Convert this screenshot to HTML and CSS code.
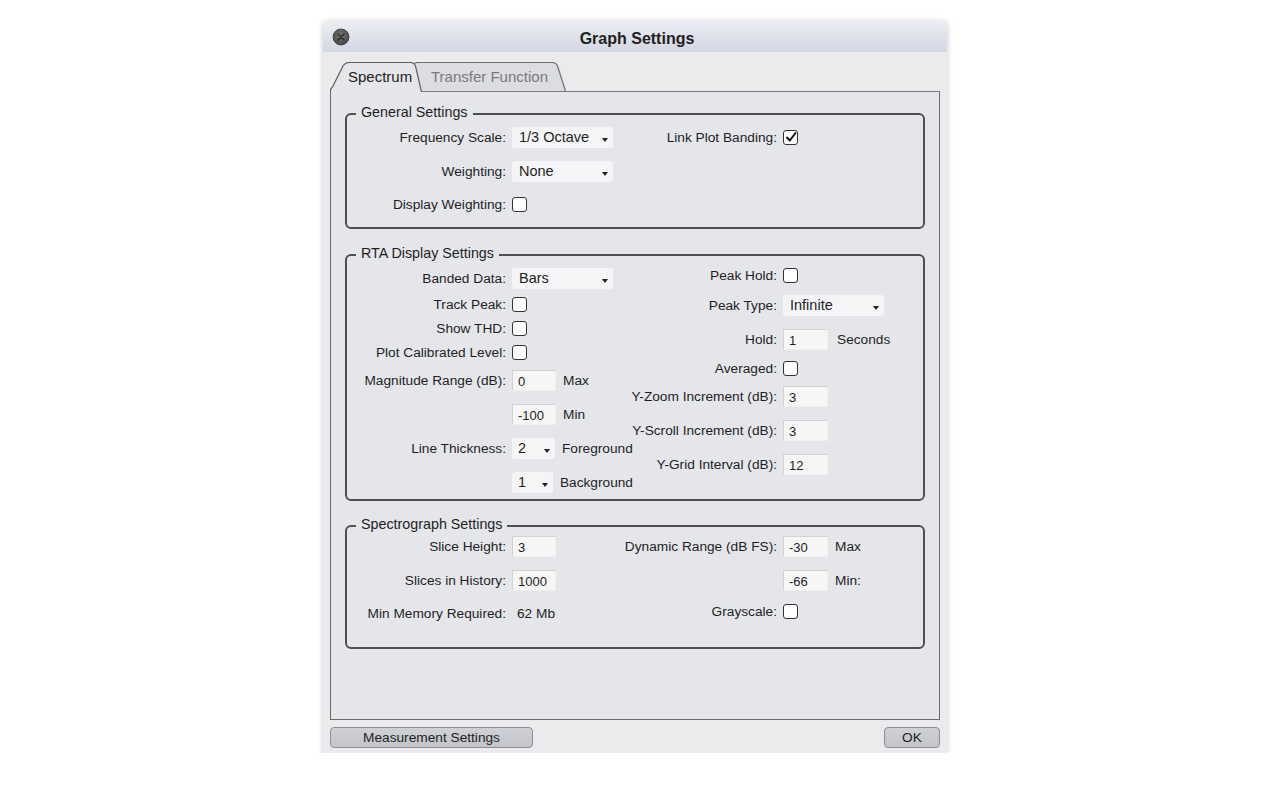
FILE: index.html
```html
<!DOCTYPE html>
<html lang="en">
<head>
    <meta charset="UTF-8">
    <meta name="viewport" content="width=device-width, initial-scale=1.0">
    <title>Graph Settings</title>
    <link rel="stylesheet" href="styles.css">
</head>
<body>
    <div class="window">
        <div class="titlebar">
            <span class="close">
                <svg width="18" height="18" viewBox="0 0 18 18">
                    <defs>
                        <radialGradient id="closeGrad" cx="50%" cy="40%" r="60%">
                            <stop offset="0" stop-color="#7a7a7a"/>
                            <stop offset="1" stop-color="#444"/>
                        </radialGradient>
                    </defs>
                    <circle cx="9" cy="9" r="8" fill="url(#closeGrad)" stroke="#3a3a3a" stroke-width="0.8"/>
                    <path d="M6 6 L12 12 M12 6 L6 12" stroke="#2b2b2b" stroke-width="1.6" stroke-linecap="round"/>
                </svg>
            </span>
            <span class="title">Graph Settings</span>
        </div>

        <div class="content">
            <div class="tabs">
                <div class="tab active">
                    <svg class="tab-shape" width="92" height="30" viewBox="0 0 92 30">
                        <path d="M0.5 30 L0.5 28 C0.5 27 2 26 3 24 L12 6 C13.5 2 16 0.5 20 0.5 L80 0.5 C83 0.5 84.5 1.5 85.5 4 L91.5 30" fill="#e5e6ea" stroke="#5e5e5e" stroke-width="1.2"/>
                    </svg>
                    <span class="tab-text">Spectrum</span>
                </div>
                <div class="tab">
                    <svg class="tab-shape" width="153" height="30" viewBox="0 0 153 30">
                        <path d="M0.5 29 L0.5 3 C1 1 2.5 0.5 5 0.5 L139 0.5 C142 0.5 143.5 1.5 144.5 4 L152.5 29" fill="#dcdde1" stroke="#6e6e6e" stroke-width="1.2"/>
                    </svg>
                    <span class="tab-text">Transfer Function</span>
                </div>
            </div>

            <div class="panel">
                <fieldset class="group general">
                    <legend>General Settings</legend>
                    <div class="cols">
                        <div class="col left pad3">
                            <div class="row">
                                <span class="lbl">Frequency Scale:</span>
                                <span class="select">1/3 Octave</span>
                            </div>
                            <div class="row">
                                <span class="lbl">Weighting:</span>
                                <span class="select">None</span>
                            </div>
                            <div class="row t9">
                                <span class="lbl">Display Weighting:</span>
                                <span class="check"></span>
                            </div>
                        </div>
                        <div class="col right pad3">
                            <div class="row">
                                <span class="lbl">Link Plot Banding:</span>
                                <span class="check checked">
                                    <svg width="12" height="12" viewBox="0 0 12 12"><path d="M2 6.5 L4.8 9.5 L10.5 2" fill="none" stroke="#111" stroke-width="2" stroke-linecap="round" stroke-linejoin="round"/></svg>
                                </span>
                            </div>
                        </div>
                    </div>
                </fieldset>

                <fieldset class="group rta">
                    <legend>RTA Display Settings</legend>
                    <div class="cols">
                        <div class="col left pad3">
                            <div class="row">
                                <span class="lbl">Banded Data:</span>
                                <span class="select">Bars</span>
                            </div>
                            <div class="row t2">
                                <span class="lbl">Track Peak:</span>
                                <span class="check"></span>
                            </div>
                            <div class="row t0">
                                <span class="lbl">Show THD:</span>
                                <span class="check"></span>
                            </div>
                            <div class="row t0">
                                <span class="lbl">Plot Calibrated Level:</span>
                                <span class="check"></span>
                            </div>
                            <div class="row t4">
                                <span class="lbl">Magnitude Range (dB):</span>
                                <input class="field" type="text" value="0" readonly>
                                <span class="unit">Max</span>
                            </div>
                            <div class="row">
                                <span class="lbl"></span>
                                <input class="field" type="text" value="-100" readonly>
                                <span class="unit">Min</span>
                            </div>
                            <div class="row">
                                <span class="lbl">Line Thickness:</span>
                                <span class="select small">2</span>
                                <span class="unit">Foreground</span>
                            </div>
                            <div class="row">
                                <span class="lbl"></span>
                                <span class="select small">1</span>
                                <span class="unit">Background</span>
                            </div>
                        </div>
                        <div class="col right">
                            <div class="row">
                                <span class="lbl">Peak Hold:</span>
                                <span class="check"></span>
                            </div>
                            <div class="row t6">
                                <span class="lbl">Peak Type:</span>
                                <span class="select">Infinite</span>
                            </div>
                            <div class="row">
                                <span class="lbl">Hold:</span>
                                <input class="field" type="text" value="1" readonly>
                                <span class="unit wide-gap">Seconds</span>
                            </div>
                            <div class="row t5">
                                <span class="lbl">Averaged:</span>
                                <span class="check"></span>
                            </div>
                            <div class="row t4">
                                <span class="lbl">Y-Zoom Increment (dB):</span>
                                <input class="field" type="text" value="3" readonly>
                            </div>
                            <div class="row">
                                <span class="lbl">Y-Scroll Increment (dB):</span>
                                <input class="field" type="text" value="3" readonly>
                            </div>
                            <div class="row">
                                <span class="lbl">Y-Grid Interval (dB):</span>
                                <input class="field" type="text" value="12" readonly>
                            </div>
                        </div>
                    </div>
                </fieldset>

                <fieldset class="group spectro">
                    <legend>Spectrograph Settings</legend>
                    <div class="cols">
                        <div class="col left">
                            <div class="row">
                                <span class="lbl">Slice Height:</span>
                                <input class="field" type="text" value="3" readonly>
                            </div>
                            <div class="row">
                                <span class="lbl">Slices in History:</span>
                                <input class="field" type="text" value="1000" readonly>
                            </div>
                            <div class="row t9">
                                <span class="lbl">Min Memory Required:</span>
                                <span class="value">62 Mb</span>
                            </div>
                        </div>
                        <div class="col right">
                            <div class="row">
                                <span class="lbl">Dynamic Range (dB FS):</span>
                                <input class="field" type="text" value="-30" readonly>
                                <span class="unit">Max</span>
                            </div>
                            <div class="row">
                                <span class="lbl"></span>
                                <input class="field" type="text" value="-66" readonly>
                                <span class="unit">Min:</span>
                            </div>
                            <div class="row t7">
                                <span class="lbl">Grayscale:</span>
                                <span class="check"></span>
                            </div>
                        </div>
                    </div>
                </fieldset>
            </div>

            <div class="footer">
                <button class="btn measure">Measurement Settings</button>
                <button class="btn ok">OK</button>
            </div>
        </div>
    </div>
</body>
</html>
```

FILE: styles.css
```css
body {
    margin: 0;
    padding-top: 21px;
    background: #ffffff;
    display: flex;
    justify-content: center;
    font-family: "Liberation Sans", Arial, sans-serif;
    font-size: 13.7px;
    color: #1e1e1e;
}

.window {
    width: 624px;
    height: 732px;
    background: #ebebed;
    border-radius: 4px 4px 2px 2px;
    box-shadow: 0 1px 6px rgba(0, 0, 0, 0.22);
    display: flex;
    flex-direction: column;
}

.titlebar {
    height: 31px;
    padding-top: 4px;
    display: grid;
    grid-template-columns: 1fr auto 1fr;
    align-items: center;
    background: linear-gradient(#eceef3, #d3d7e2);
    border-radius: 4px 4px 0 0;
    box-sizing: border-box;
}

.close {
    padding-left: 9px;
    margin-top: -4px;
    display: flex;
}

.title {
    font-size: 16px;
    font-weight: bold;
    color: #222;
    padding-left: 4px;
}

.content {
    padding: 10px 7px 0;
    display: flex;
    flex-direction: column;
}

/* tabs */
.tabs {
    display: flex;
    height: 30px;
    margin-bottom: -1px;
    position: relative;
    z-index: 1;
}

.tab {
    position: relative;
    height: 30px;
    line-height: 30px;
    font-size: 15px;
    color: #7a7a7a;
}

.tab-shape {
    position: absolute;
    left: 0;
    top: 0;
}

.tab-text {
    position: relative;
}

.tab.active {
    z-index: 2;
    width: 92px;
    padding-left: 18px;
    box-sizing: border-box;
    color: #1e1e1e;
}

.tab:not(.active) {
    width: 153px;
    margin-left: -9px;
    padding-left: 18px;
    box-sizing: border-box;
}

/* panel */
.panel {
    height: 629px;
    box-sizing: border-box;
    background: #e5e6ea;
    border: 1px solid #6a6a6a;
    border-top-color: #7a7a7a;
    padding-top: 14px;
}

.group {
    margin: 0 14px;
    padding: 0;
    border: 2px solid #4f4f4f;
    border-radius: 6px;
    min-inline-size: 0;
}

.group legend {
    margin-left: 9px;
    padding: 0 5px 4px;
    font-size: 14.3px;
    line-height: 12px;
}

.group.general {
    padding-bottom: 11px;
}

.group.rta {
    margin-top: 18px;
    padding-bottom: 5px;
}

.group.spectro {
    margin-top: 17px;
    padding-bottom: 22px;
}

.cols {
    display: flex;
}

.col {
    display: flex;
    flex-direction: column;
}

.col.left {
    width: 286px;
    flex: none;
}

.col.right {
    flex: 1;
}

.col.pad3 {
    padding-top: 3px;
}

.row {
    height: 24px;
    display: flex;
    align-items: center;
    white-space: nowrap;
}

.row + .row { margin-top: 10px; }
.row.t0 { margin-top: 0; }
.row.t2 { margin-top: 2px; }
.row.t4 { margin-top: 4px; }
.row.t5 { margin-top: 5px; }
.row.t6 { margin-top: 6px; }
.row.t7 { margin-top: 7px; }
.row.t9 { margin-top: 9px; }

.lbl {
    flex: none;
    width: 159px;
    margin-right: 6px;
    display: flex;
    justify-content: flex-end;
}

.col.right .lbl {
    width: 144px;
}

/* controls */
.select {
    width: 101px;
    height: 21px;
    box-sizing: border-box;
    padding: 0 5px 0 7px;
    background: #f5f5f7;
    border-radius: 3px;
    font-size: 14.5px;
    display: flex;
    align-items: center;
    justify-content: space-between;
}

.select::after {
    content: "";
    border-top: 4px solid #222;
    border-left: 3px solid transparent;
    border-right: 3px solid transparent;
    margin-top: 5px;
}

.select.small {
    width: 43px;
    padding-left: 6px;
}

.field {
    width: 44px;
    height: 21px;
    box-sizing: border-box;
    margin: 0;
    padding: 3px 0 0 5px;
    border: 1px solid;
    border-color: #d2d2d4 #efeff0 #efeff0 #d2d2d4;
    background: #f6f6f7;
    font-family: inherit;
    font-size: 13px;
    color: #1e1e1e;
    outline: none;
}

.col.right .field {
    width: 45px;
}

.unit {
    margin-left: 7px;
}

.unit.wide-gap {
    margin-left: 9px;
}

.value {
    padding-left: 5px;
}

.check {
    width: 15px;
    height: 15px;
    box-sizing: border-box;
    border: 1.5px solid #333;
    border-radius: 3px;
    background: #ffffff;
    display: flex;
    align-items: center;
    justify-content: center;
}

/* footer */
.footer {
    margin-top: 7px;
    display: flex;
    justify-content: space-between;
}

.btn {
    height: 21px;
    box-sizing: border-box;
    padding: 0;
    border: 1px solid #8c8e93;
    border-radius: 4px;
    background: linear-gradient(#cfd1d6, #c3c5ca);
    font-family: inherit;
    font-size: 13.7px;
    color: #1e1e1e;
}

.btn.measure {
    width: 203px;
}

.btn.ok {
    width: 56px;
}
```
